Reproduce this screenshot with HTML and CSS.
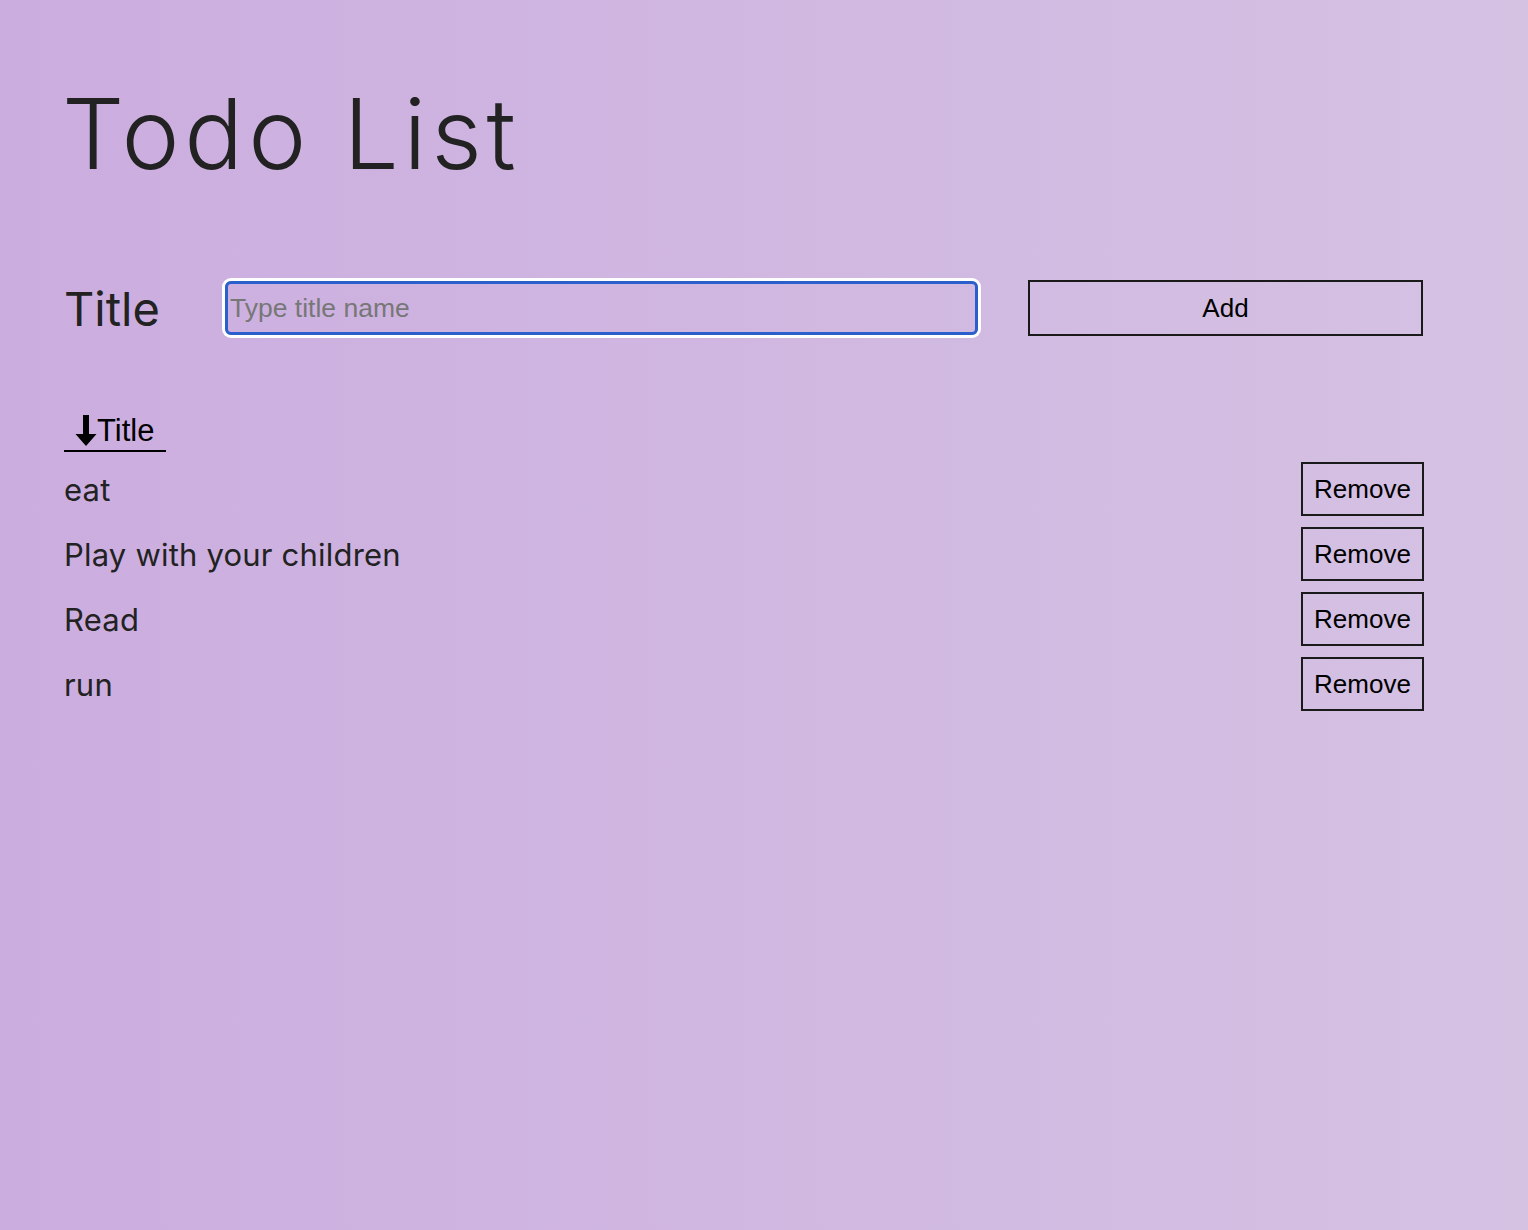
FILE: index.html
```html
<!DOCTYPE html>
<html lang="en">
<head>
<meta charset="utf-8">
<title>Todo List</title>
<link rel="stylesheet" href="styles.css">
</head>
<body>
<main class="app">
  <h1 class="heading">Todo List</h1>
  <form class="add-form">
    <label class="add-label" for="title">Title</label>
    <input id="title" class="add-input" type="text" placeholder="Type title name">
    <button type="button" class="btn add-btn">Add</button>
  </form>
  <div class="sort-head"><span class="sort-arrow"><svg width="22" height="33" viewBox="0 0 22 33"><path d="M8 1h6v19h7.5L11 32 0.5 20H8z" fill="#000"/></svg></span>Title</div>
  <ul class="todo-list">
    <li class="todo"><span class="todo-text">eat</span><button type="button" class="btn remove-btn">Remove</button></li>
    <li class="todo"><span class="todo-text">Play with your children</span><button type="button" class="btn remove-btn">Remove</button></li>
    <li class="todo"><span class="todo-text">Read</span><button type="button" class="btn remove-btn">Remove</button></li>
    <li class="todo"><span class="todo-text">run</span><button type="button" class="btn remove-btn">Remove</button></li>
  </ul>
</main>
</body>
</html>
```
FILE: styles.css
```css
* { box-sizing: border-box; }
html, body { height: 100%; }
body {
  margin: 0;
  background: linear-gradient(90deg, #cbaddf 0%, #d5c2e3 100%);
  font-family: Inter, "Open Sans", sans-serif;
  color: #222;
}
.app {
  width: 1360px;
  margin-left: 64px;
  padding-top: 79px;
}
.heading {
  margin: 0;
  font-weight: 300;
  font-size: 98px;
  line-height: 110px;
  letter-spacing: 4.8px;
  color: #222;
  margin-left: -2px;
}
.add-form {
  display: flex;
  align-items: center;
  margin-top: 89px;
  height: 60px;
}
.add-label {
  width: 158px;
  font-size: 47px;
  font-weight: 400;
  color: #222;
}
.add-input {
  width: 753px;
  height: 54px;
  margin-left: 3px;
  border: 3px solid #2a5fcc;
  border-radius: 6px;
  box-shadow: 0 0 0 3px #fff;
  background: transparent;
  font-family: "Liberation Sans", Arial, sans-serif;
  font-size: 26.5px;
  padding: 0 2px;
  outline: none;
  color: #222;
}
.add-input::placeholder { color: #777; }
.btn {
  font-family: "Liberation Sans", Arial, sans-serif;
  font-size: 26px;
  color: #000;
  background: transparent;
  border: 2px solid #1a1a1a;
  border-radius: 0;
  padding: 0;
  cursor: pointer;
}
.add-btn {
  margin-left: 50px;
  width: 395px;
  height: 56px;
}
.sort-head {
  display: inline-flex;
  align-items: center;
  margin-top: 74px;
  padding: 0 12px 0 11px;
  height: 40px;
  border-bottom: 2px solid #000;
  font-family: "Liberation Sans", Arial, sans-serif;
  font-size: 31px;
  color: #000;
}
.sort-arrow { display: inline-flex; margin-right: 0; margin-top: -2px; }
.todo-list {
  list-style: none;
  margin: 10px 0 0;
  padding: 0;
}
.todo {
  display: flex;
  align-items: center;
  justify-content: space-between;
  height: 54px;
  margin-bottom: 11px;
}
.todo-text {
  font-size: 31px;
  letter-spacing: 0.2px;
  color: #222;
}
.remove-btn {
  width: 123px;
  height: 54px;
}
```
